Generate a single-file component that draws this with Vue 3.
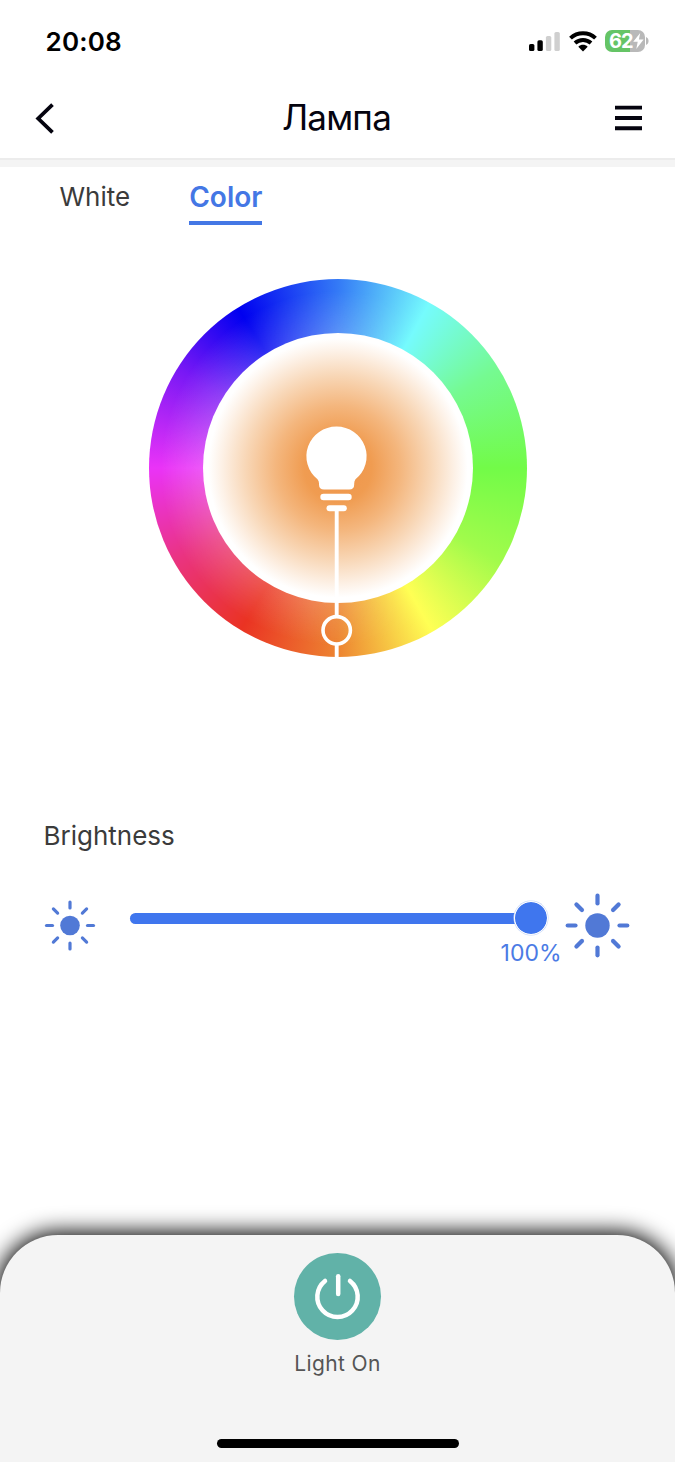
<script setup>
import { ref } from 'vue'

const tabs = ['White', 'Color']
const activeTab = ref('Color')
const brightness = ref(100)
const rays = [0, 45, 90, 135, 180, 225, 270, 315]
</script>

<template>
  <main class="screen">
    <div class="status">
      <span class="time">20:08</span>
      <div class="indicators">
        <svg class="signal" width="31" height="20" viewBox="0 0 31 20">
          <rect x="0" y="12" width="5.4" height="7" rx="1.6" fill="#000" />
          <rect x="8.4" y="8.3" width="5.4" height="10.7" rx="1.6" fill="#000" />
          <rect x="16.9" y="4" width="5.4" height="15" rx="1.6" fill="#cfcfcf" />
          <rect x="25.4" y="0" width="5.4" height="19" rx="1.6" fill="#cfcfcf" />
        </svg>
        <svg class="wifi" width="28" height="21" viewBox="0 0 28 21">
          <g fill="none" stroke="#000" stroke-width="4">
            <path d="M1.5 7.1C8.5 .5 19.5 .5 26.500 7.100" />
            <path d="M6 12C10.600 7.900 17.400 7.900 22 12" />
          </g>
          <path d="M9.300 15.800C12.100 13.200 15.900 13.200 18.700 15.800L14 20.400Z" fill="#000" />
        </svg>
        <div class="battery">
          <span class="level">62</span>
          <svg class="bolt" width="11" height="16" viewBox="0 0 11 16">
            <path d="M7.200 0L.2 8.800H4.700L3.300 16L10.600 6.600H5.900Z" fill="#fff" />
          </svg>
        </div>
        <svg class="cap" width="3" height="8" viewBox="0 0 3 8">
          <path d="M0 0C3.4 1.2 3.4 6.8 0 8Z" fill="#b9b9b9" />
        </svg>
      </div>
    </div>

    <header class="nav">
      <svg width="20" height="32" viewBox="0 0 20 32">
        <path d="M18.500 2.700L4.200 16.500L18.500 30.300" fill="none" stroke="#05040f" stroke-width="3.800" />
      </svg>
      <h1>Лампа</h1>
      <svg width="27" height="26" viewBox="0 0 27 26">
        <path d="M0 2.600H27M0 13H27M0 23.200H27" stroke="#05040f" stroke-width="3.900" />
      </svg>
    </header>

    <nav class="tabs">
      <button
        v-for="tab in tabs"
        :key="tab"
        class="tab"
        :class="{ active: tab === activeTab }"
        @click="activeTab = tab"
      >{{ tab }}</button>
    </nav>

    <section class="wheel">
      <div class="glow"></div>
      <svg class="picker" width="378" height="378" viewBox="0 0 378 378">
        <path
          d="M187.500 147.500A30.200 29.700 0 0 1 206.500 200.200Q205.200 202 205.200 204.500V205.500Q205.200 210.500 200.200 210.500H175Q170 210.500 170 205.500V204.500Q170 202 168.500 200.200A30.200 29.700 0 0 1 187.500 147.500Z"
          fill="#fff"
        />
        <g stroke="#fff" stroke-linecap="round">
          <path d="M174.500 218H199.500" stroke-width="6.400" />
          <path d="M180.500 229.200H194.800" stroke-width="6" />
        </g>
        <g fill="none" stroke="#fff">
          <path d="M187.700 230V338M187.700 365V378" stroke-width="3.900" />
          <circle cx="187.700" cy="351.300" r="13.700" stroke-width="3.600" />
        </g>
      </svg>
    </section>

    <section class="brightness">
      <h2>Brightness</h2>
      <div class="control">
        <svg class="sun" width="52" height="52" viewBox="-26 -26.500 52 52">
          <circle r="9.800" fill="#5179d6" />
          <path
            v-for="ray in rays"
            :key="ray"
            :transform="`rotate(${ray})`"
            d="M0 -17.500V-23.500"
            stroke="#5179d6"
            stroke-width="3.200"
            stroke-linecap="round"
          />
        </svg>
        <div class="slider">
          <div class="track"><div class="fill" :style="{ width: brightness + '%' }"></div></div>
          <div class="thumb"></div>
          <span class="value">{{ brightness }}%</span>
        </div>
        <svg class="sun" width="66" height="66" viewBox="-33.500 -33.500 66 66">
          <circle r="12.200" fill="#5179d6" />
          <path
            v-for="ray in rays"
            :key="ray"
            :transform="`rotate(${ray})`"
            d="M0 -22V-29.800"
            stroke="#5179d6"
            stroke-width="4.200"
            stroke-linecap="round"
          />
        </svg>
      </div>
    </section>

    <footer class="panel">
      <button class="power">
        <svg width="87" height="87" viewBox="0 0 87 87">
          <g fill="none" stroke="#fff" stroke-width="4.500" stroke-linecap="round">
            <path d="M44.200 23.200V41" />
            <path d="M31 28A20.200 20.200 0 1 0 56 28" />
          </g>
        </svg>
      </button>
      <span class="state">Light On</span>
      <div class="home"></div>
    </footer>
  </main>
</template>

<style>
body {
  margin: 0;
  background: #fff;
}
</style>

<style scoped>
.screen {
  width: 675px;
  height: 1462px;
  display: flex;
  flex-direction: column;
  overflow: hidden;
  background: #fff;
  font-family: Inter, "Liberation Sans", sans-serif;
}
.screen svg {
  display: block;
  flex: none;
}
button {
  border: 0;
  padding: 0;
  background: none;
  font: inherit;
}
.status {
  height: 78px;
  box-sizing: border-box;
  padding: 26px 26px 0 45.5px;
  display: flex;
  justify-content: space-between;
  align-items: flex-start;
}
.time {
  font-size: 26px;
  line-height: 32px;
  font-weight: 600;
  letter-spacing: 0.2px;
}
.indicators {
  display: flex;
  align-items: flex-start;
  padding-top: 4px;
}
.signal {
  margin-top: 2px;
}
.wifi {
  margin: 1px 8px 0 9px;
}
.battery {
  width: 40px;
  height: 22px;
  border-radius: 7px;
  background: linear-gradient(90deg, #65c466 62%, #b9b9b9 62%);
  display: flex;
  align-items: center;
  padding-left: 4px;
  box-sizing: border-box;
}
.level {
  width: 23px;
  color: #fff;
  font-size: 20px;
  font-weight: 700;
  line-height: 24px;
  letter-spacing: -1px;
}
.bolt {
  margin-left: 1px;
}
.cap {
  margin: 7px 0 0 1px;
}
.nav {
  height: 80px;
  flex: none;
  box-sizing: border-box;
  padding: 0 33px 0 34px;
  display: grid;
  grid-template-columns: 27px 1fr 27px;
  align-items: center;
}
h1,
h2 {
  margin: 0;
  font-weight: 400;
}
h1 {
  text-align: center;
  font-size: 35px;
  line-height: 44px;
  padding: 0 3px 2px 0;
  letter-spacing: -0.8px;
  color: #05040f;
}
.tabs {
  flex: none;
  height: 112px;
  box-sizing: border-box;
  border-top: 9px solid #f4f4f4;
  padding: 12px 0 0 59.5px;
  display: flex;
  gap: 59px;
  align-items: flex-start;
  position: relative;
}
.tabs::before {
  content: "";
  position: absolute;
  top: -9px;
  left: 0;
  right: 0;
  height: 2px;
  background: #ececec;
}
.tab {
  height: 46px;
  border-bottom: 4px solid transparent;
  font-size: 26px;
  line-height: 36px;
  padding-bottom: 6px;
  color: #3b3b3b;
}
.tab.active {
  color: #4477e5;
  border-color: #4477e5;
  font-weight: 600;
  font-size: 28px;
}
.wheel {
  flex: none;
  width: 378px;
  height: 378px;
  margin: 9px 0 0 149px;
  border-radius: 50%;
  display: grid;
  place-items: center;
  background: conic-gradient(
    #347af6 0deg,
    #75fbfd 29deg,
    #75fa91 58deg,
    #72fb48 90deg,
    #a1fb4b 120deg,
    #ffff54 150deg,
    #ed8431 180deg,
    #ea3323 211deg,
    #ea337f 240deg,
    #ea33f7 270deg,
    #7818f5 302deg,
    #0000f0 328deg,
    #347af6 360deg
  );
}
.wheel::before {
  content: "";
  width: 378px;
  height: 378px;
  border-radius: 50%;
  background: radial-gradient(circle closest-side, rgba(255, 255, 255, 0.19) 71%, transparent 94%);
  mask-image: conic-gradient(#000 0deg, transparent 28deg, transparent 150deg, #000 190deg);
}
.wheel > *,
.wheel::before {
  grid-area: 1 / 1;
}
.glow,
.picker {
  z-index: 1;
}
.glow {
  width: 270px;
  height: 270px;
  border-radius: 50%;
  background: radial-gradient(circle closest-side, #ef944a 0%, #f09c51 25%, #f4b67d 46%, #f8d6b5 68%, #fdf2e8 87%, #fff 96%);
}
.brightness {
  flex: none;
  height: 415px;
  margin-top: 163px;
  padding: 0 43px;
}
h2 {
  padding-left: 0.5px;
  font-size: 26px;
  line-height: 32px;
  color: #3b3b3b;
}
.control {
  display: flex;
  align-items: center;
  height: 66px;
  margin-top: 40px;
}
.sun {
  margin-left: 1px;
}
.slider {
  position: relative;
  width: 401px;
  height: 66px;
  margin: 0 17px 0 34px;
}
.slider + .sun {
  margin-left: 16px;
}
.track {
  margin-top: 21px;
  height: 11px;
  border-radius: 6px;
  background: #e5e5e5;
}
.fill {
  height: 11px;
  border-radius: 6px;
  background: #3f76ee;
}
.thumb {
  position: absolute;
  top: 9px;
  right: -17px;
  width: 32px;
  height: 32px;
  border: 1px solid #fff;
  border-radius: 50%;
  background: #3f76ee;
  background-clip: padding-box;
  box-shadow: 0 0 0 0.5px #c9d8f8;
}
.value {
  position: absolute;
  top: 47px;
  right: -30.5px;
  font-size: 23px;
  line-height: 28px;
  color: #4b7be5;
}
.panel {
  flex: none;
  height: 227px;
  border-radius: 58px 58px 0 0;
  background: #f4f4f4;
  box-shadow: 0 0 22px 3px #000;
  display: flex;
  flex-direction: column;
  align-items: center;
}
.power {
  flex: none;
  width: 87px;
  height: 87px;
  margin-top: 18px;
  border-radius: 50%;
  background: #61b2a8;
}
.state {
  margin-top: 11px;
  font-size: 21px;
  line-height: 26px;
  color: #555;
  letter-spacing: 0.4px;
}
.home {
  width: 242px;
  height: 9px;
  margin-top: 61.5px;
  border-radius: 5px;
  background: #000;
}
</style>
